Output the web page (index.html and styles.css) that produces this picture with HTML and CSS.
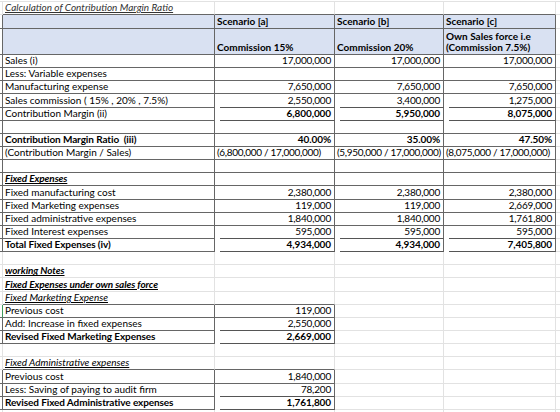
FILE: index.html
```html
<!DOCTYPE html>
<html lang="en">
<head>
  <meta charset="UTF-8">
  <title>Calculation of Contribution Margin Ratio</title>
  <link rel="stylesheet" href="styles.css">
</head>
<body>
<table class="sheet">
  <colgroup>
    <col class="col-gap">
    <col class="col-a">
    <col class="col-b">
    <col class="col-c">
    <col class="col-d">
    <col class="col-e">
  </colgroup>

  <!-- title -->
  <tr class="row-title">
    <td></td>
    <td class="title">Calculation of Contribution Margin Ratio</td>
    <td></td><td></td><td></td><td></td>
  </tr>

  <!-- scenario headers -->
  <tr class="boxed head head-1">
    <td></td>
    <td></td>
    <td>Scenario [a]</td>
    <td>Scenario [b]</td>
    <td>Scenario [c]</td>
    <td></td>
  </tr>
  <tr class="boxed head head-2">
    <td></td>
    <td></td>
    <td>Commission 15%</td>
    <td>Commission 20%</td>
    <td>Own Sales force i.e<br>(Commission 7.5%)</td>
    <td></td>
  </tr>

  <!-- contribution margin -->
  <tr class="boxed">
    <td></td><td>Sales (i)</td>
    <td class="num">17,000,000</td><td class="num">17,000,000</td><td class="num">17,000,000</td><td></td>
  </tr>
  <tr class="boxed">
    <td></td><td>Less: Variable expenses</td>
    <td></td><td></td><td></td><td></td>
  </tr>
  <tr class="boxed">
    <td></td><td>Manufacturing expense</td>
    <td class="num">7,650,000</td><td class="num">7,650,000</td><td class="num">7,650,000</td><td></td>
  </tr>
  <tr class="boxed">
    <td></td><td>Sales commission ( 15% , 20% , 7.5%)</td>
    <td class="num ul">2,550,000</td><td class="num ul">3,400,000</td><td class="num ul">1,275,000</td><td></td>
  </tr>
  <tr class="boxed">
    <td></td><td>Contribution Margin (ii)</td>
    <td class="num ul bold">6,800,000</td><td class="num ul bold">5,950,000</td><td class="num ul bold">8,075,000</td><td></td>
  </tr>
  <tr class="boxed">
    <td></td><td></td><td></td><td></td><td></td><td></td>
  </tr>
  <tr class="boxed">
    <td></td><td class="bold">Contribution Margin Ratio&nbsp; (iii)</td>
    <td class="num bold">40.00%</td><td class="num bold">35.00%</td><td class="num bold">47.50%</td><td></td>
  </tr>
  <tr class="boxed">
    <td></td><td>(Contribution Margin / Sales)</td>
    <td class="calc">(6,800,000 / 17,000,000)</td><td class="calc">(5,950,000 / 17,000,000)</td><td class="calc">(8,075,000 / 17,000,000)</td><td></td>
  </tr>
  <tr class="boxed">
    <td></td><td></td><td></td><td></td><td></td><td></td>
  </tr>

  <!-- fixed expenses -->
  <tr class="boxed">
    <td></td><td class="note bold">Fixed Expenses</td>
    <td></td><td></td><td></td><td></td>
  </tr>
  <tr class="boxed">
    <td></td><td>Fixed manufacturing cost</td>
    <td class="num">2,380,000</td><td class="num">2,380,000</td><td class="num">2,380,000</td><td></td>
  </tr>
  <tr class="boxed">
    <td></td><td>Fixed Marketing expenses</td>
    <td class="num">119,000</td><td class="num">119,000</td><td class="num">2,669,000</td><td></td>
  </tr>
  <tr class="boxed">
    <td></td><td>Fixed administrative expenses</td>
    <td class="num">1,840,000</td><td class="num">1,840,000</td><td class="num">1,761,800</td><td></td>
  </tr>
  <tr class="boxed">
    <td></td><td>Fixed Interest expenses</td>
    <td class="num ul">595,000</td><td class="num ul">595,000</td><td class="num ul">595,000</td><td></td>
  </tr>
  <tr class="boxed">
    <td></td><td class="bold">Total Fixed Expenses (iv)</td>
    <td class="num ul bold">4,934,000</td><td class="num ul bold">4,934,000</td><td class="num ul bold">7,405,800</td><td></td>
  </tr>

  <!-- working notes -->
  <tr>
    <td></td><td></td><td></td><td></td><td></td><td></td>
  </tr>
  <tr>
    <td></td><td class="note bold">working Notes</td><td></td><td></td><td></td><td></td>
  </tr>
  <tr>
    <td></td><td class="note bold">Fixed Expenses under own sales force</td><td></td><td></td><td></td><td></td>
  </tr>
  <tr class="open-box">
    <td></td><td class="note">Fixed Marketing Expense</td><td></td><td></td><td></td><td></td>
  </tr>
  <tr class="boxed-ab active">
    <td></td><td>Previous cost</td><td class="num">119,000</td><td></td><td></td><td></td>
  </tr>
  <tr class="boxed-ab">
    <td></td><td>Add: Increase in fixed expenses</td><td class="num ul">2,550,000</td><td></td><td></td><td></td>
  </tr>
  <tr class="boxed-ab">
    <td></td><td class="bold">Revised Fixed Marketing Expenses</td><td class="num ul bold">2,669,000</td><td></td><td></td><td></td>
  </tr>
  <tr>
    <td></td><td></td><td></td><td></td><td></td><td></td>
  </tr>
  <tr class="open-box">
    <td></td><td class="note">Fixed Administrative expenses</td><td></td><td></td><td></td><td></td>
  </tr>
  <tr class="boxed-ab">
    <td></td><td>Previous cost</td><td class="num">1,840,000</td><td></td><td></td><td></td>
  </tr>
  <tr class="boxed-ab">
    <td></td><td>Less: Saving of paying to audit firm</td><td class="num ul">78,200</td><td></td><td></td><td></td>
  </tr>
  <tr class="boxed-ab">
    <td></td><td class="bold">Revised Fixed Administrative expenses</td><td class="num ul bold">1,761,800</td><td></td><td></td><td></td>
  </tr>
  <tr>
    <td></td><td></td><td></td><td></td><td></td><td></td>
  </tr>
</table>
</body>
</html>
```

FILE: styles.css
```css
body {
  margin: 0;
  font-family: Lato, "Liberation Sans", sans-serif;
  font-size: 10px;
  color: #000;
  background: #fff;
  overflow: hidden;
}

.sheet {
  border-collapse: separate;
  border-spacing: 0;
  table-layout: fixed;
  width: 560px;
  margin-top: 1px;
}

.col-gap { width: 3px; }
.col-a { width: 212px; }
.col-b { width: 120px; }
.col-c { width: 109px; }
.col-d { width: 112px; }

.sheet tr {
  height: 13.15px;
}

.sheet td {
  padding: 0 2px 1px;
  border-right: 1px solid #e2e2e2;
  border-bottom: 1px solid #e2e2e2;
  vertical-align: bottom;
  white-space: nowrap;
  overflow: hidden;
  line-height: 11px;
}

.sheet td:first-child,
.sheet td:last-child {
  padding: 0;
}

.sheet td:last-child {
  border-right: none;
}

/* title row */
.row-title {
  height: 13px !important;
}

.row-title td {
  border-top: 1px solid #e2e2e2;
}

.row-title td:nth-child(n+2):nth-child(-n+5) {
  border-bottom-color: #666;
}

.title {
  font-style: italic;
  text-decoration: underline;
  color: #333;
}

/* bordered block */
.boxed td:nth-child(-n+5) {
  border-right-color: #666;
  border-bottom-color: #666;
}

.boxed-ab td:nth-child(-n+3) {
  border-right-color: #666;
  border-bottom-color: #666;
}

.open-box td:nth-child(2),
.open-box td:nth-child(3) {
  border-bottom-color: #666;
}

.active td:first-child {
  border-right-color: #3f9a5c;
}

/* header */
.head td:nth-child(n+2):nth-child(-n+5) {
  background: #d9e1f2;
  font-weight: bold;
}

.head-1 {
  height: 14px !important;
}

.head-2 {
  height: 26px !important;
}

.num {
  text-align: right;
  padding-right: 3px !important;
  letter-spacing: -0.2px;
}

.calc {
  letter-spacing: -0.3px;
}

.bold {
  font-weight: bold;
  letter-spacing: -0.1px;
}

.note {
  font-style: italic;
  text-decoration: underline;
}

/* accounting underline, inset from the left edge */
.sheet td.ul {
  border-bottom-color: transparent;
  background: linear-gradient(#555, #555) right bottom / calc(100% - 5px) 1px no-repeat;
  background-origin: border-box;
}
```
